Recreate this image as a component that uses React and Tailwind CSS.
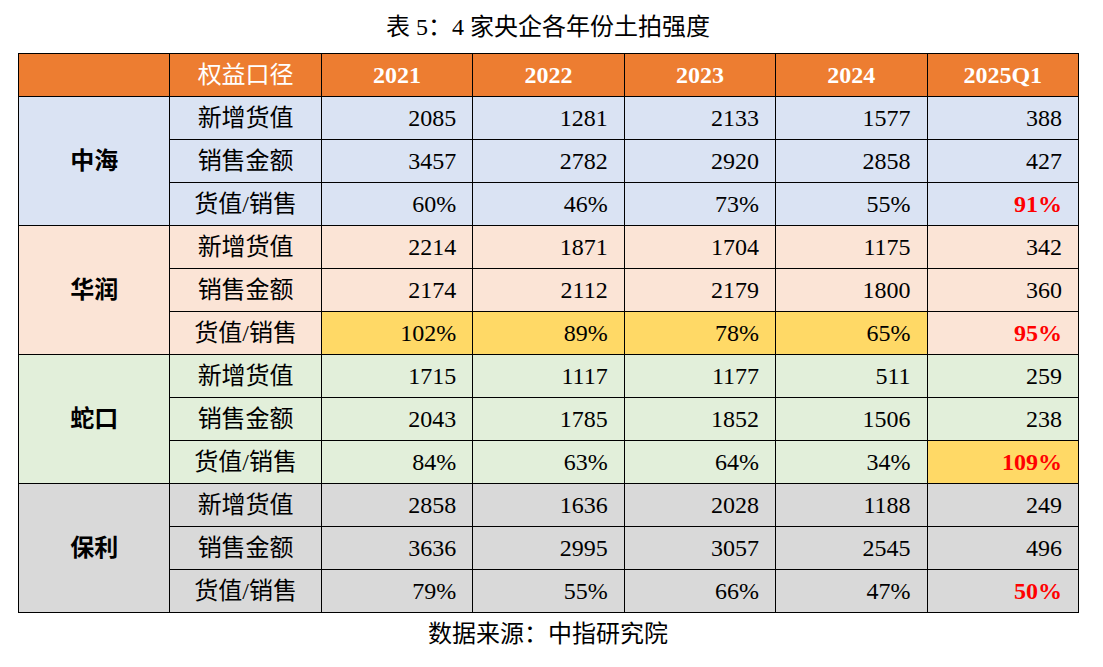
import React from "react";

const groups = [
  {
    name: "中海",
    bg: "bg-[#dae3f3]",
    rows: [
      ["新增货值", ["2085", "1281", "2133", "1577", "388"]],
      ["销售金额", ["3457", "2782", "2920", "2858", "427"]],
      ["货值/销售", ["60%", "46%", "73%", "55%", "91%"]],
    ],
    hl: [],
  },
  {
    name: "华润",
    bg: "bg-[#fbe4d6]",
    rows: [
      ["新增货值", ["2214", "1871", "1704", "1175", "342"]],
      ["销售金额", ["2174", "2112", "2179", "1800", "360"]],
      ["货值/销售", ["102%", "89%", "78%", "65%", "95%"]],
    ],
    hl: [0, 1, 2, 3],
  },
  {
    name: "蛇口",
    bg: "bg-[#e2efda]",
    rows: [
      ["新增货值", ["1715", "1117", "1177", "511", "259"]],
      ["销售金额", ["2043", "1785", "1852", "1506", "238"]],
      ["货值/销售", ["84%", "63%", "64%", "34%", "109%"]],
    ],
    hl: [4],
  },
  {
    name: "保利",
    bg: "bg-[#d9d9d9]",
    rows: [
      ["新增货值", ["2858", "1636", "2028", "1188", "249"]],
      ["销售金额", ["3636", "2995", "3057", "2545", "496"]],
      ["货值/销售", ["79%", "55%", "66%", "47%", "50%"]],
    ],
    hl: [],
  },
];

const years = ["2021", "2022", "2023", "2024", "2025Q1"];

export default function App() {
  return (
    <div
      className="w-[1103px] h-[667px] bg-white text-black text-[24px] leading-none"
      style={{ fontFamily: '"Liberation Serif", "Noto Sans CJK SC", serif' }}
    >
      {/* caption */}
      <div className="h-[53px] w-[1096px] flex items-center justify-center">
        表 5：4 家央企各年份土拍强度
      </div>
      <table className="ml-[18px] w-[1061px] table-fixed border-collapse">
        <thead>
          <tr className="h-[43px] bg-[#ed7d31] text-white">
            <th className="border border-black"></th>
            <th className="border border-black font-normal">权益口径</th>
            {years.map((y) => (
              <th key={y} className="border border-black font-bold">
                {y}
              </th>
            ))}
          </tr>
        </thead>
        <tbody>
          {groups.map((g) =>
            g.rows.map(([label, vals], ri) => (
              <tr key={g.name + ri} className={`h-[43px] ${g.bg}`}>
                {ri === 0 && (
                  <td rowSpan={3} className="border border-black text-center font-bold">
                    {g.name}
                  </td>
                )}
                <td className="border border-black text-center">{label}</td>
                {vals.map((v, ci) => {
                  const ratio = ri === 2;
                  const yellow = ratio && g.hl.includes(ci);
                  const red = ratio && ci === 4;
                  return (
                    <td
                      key={ci}
                      className={`border border-black text-right pr-4 ${
                        yellow ? "bg-[#ffd966]" : ""
                      } ${red ? "text-[#ff0000] font-bold" : ""}`}
                    >
                      {v}
                    </td>
                  );
                })}
              </tr>
            ))
          )}
        </tbody>
      </table>
      {/* source */}
      <div className="w-[1096px] h-[42px] flex items-center justify-center">
        数据来源：中指研究院
      </div>
    </div>
  );
}
